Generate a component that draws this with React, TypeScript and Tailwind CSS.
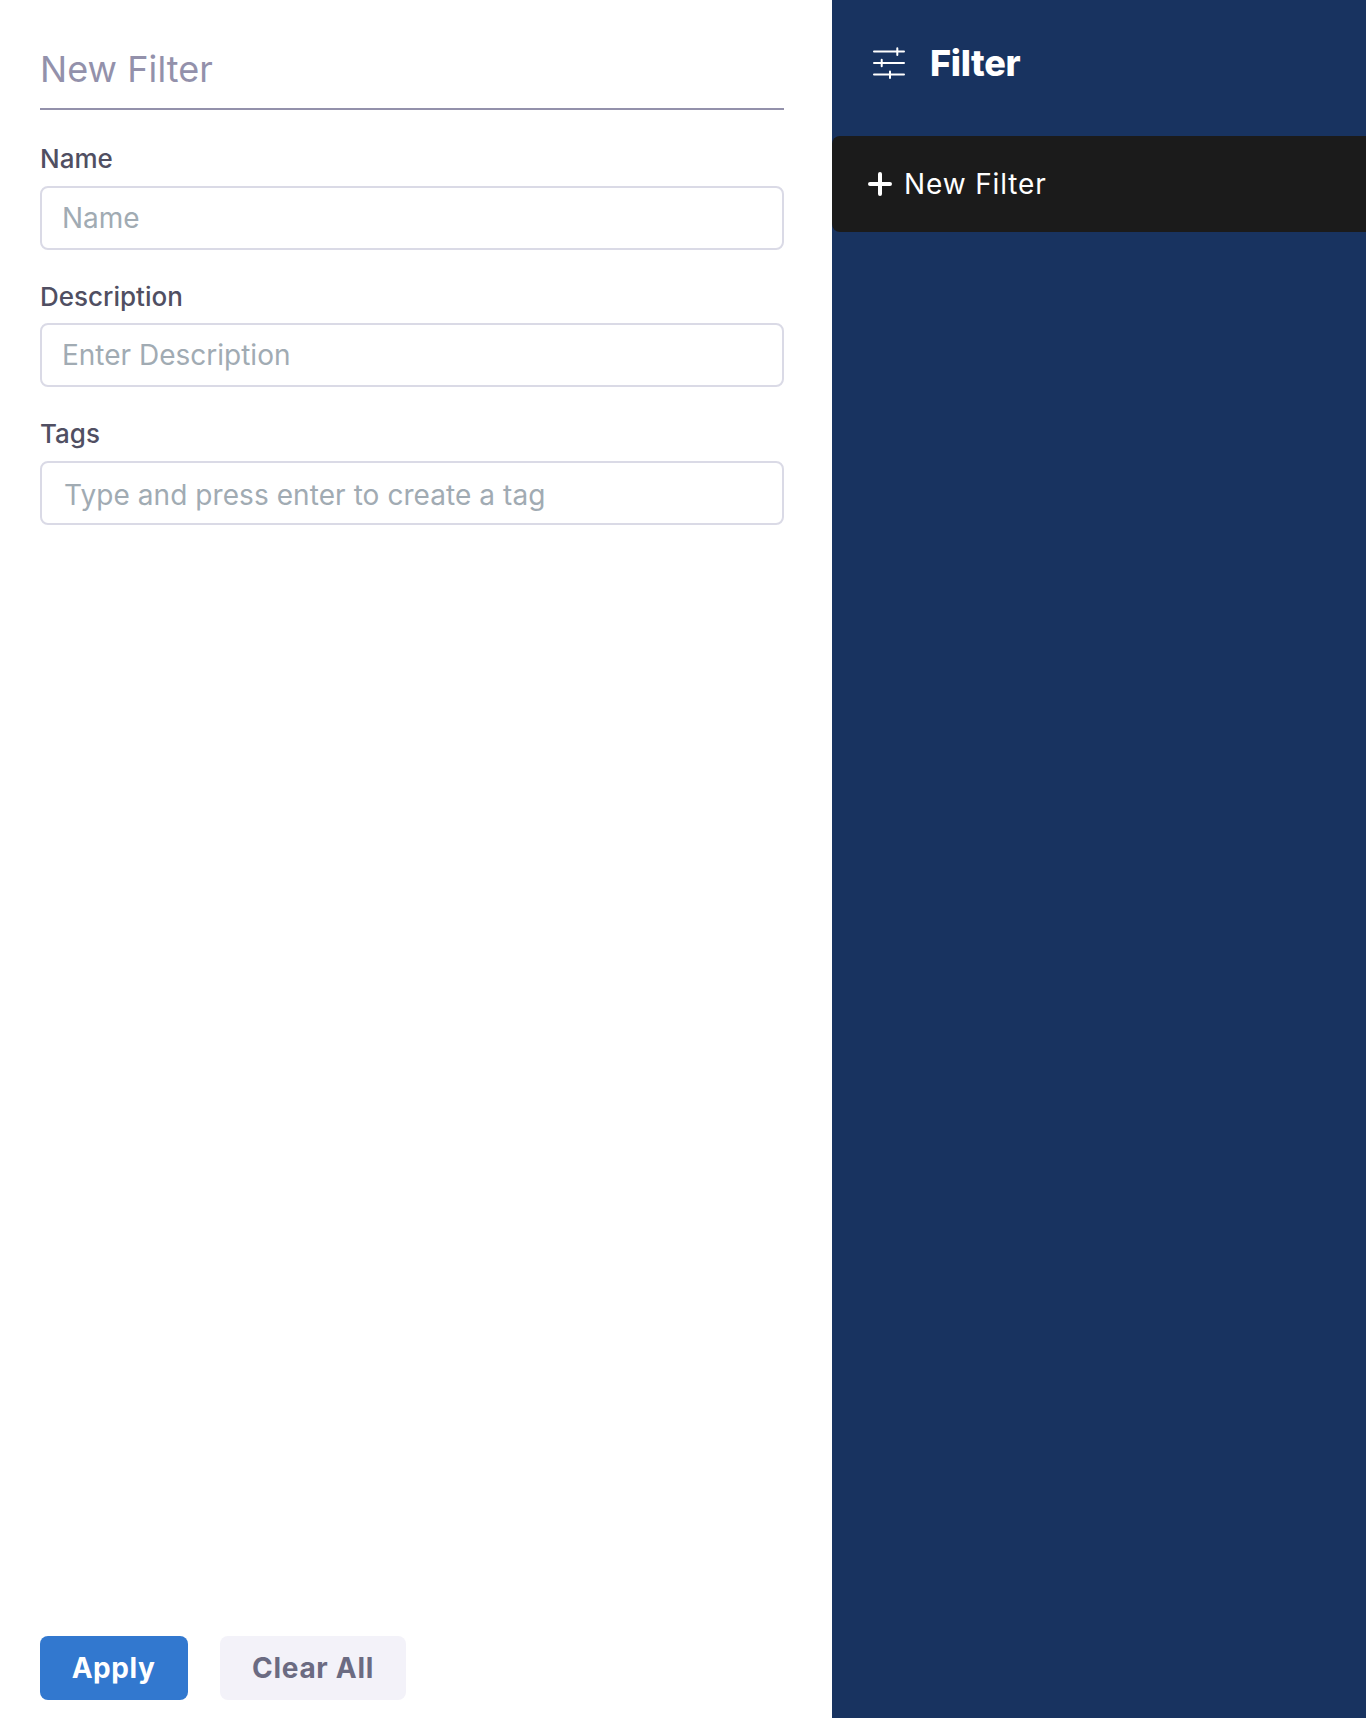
import type { ReactNode } from "react";

function SlidersIcon() {
  return (
    <svg width="32" height="32" viewBox="0 0 32 32" fill="none" stroke="white" strokeWidth="2" strokeLinecap="round" className="shrink-0">
      <path d="M1 4.5H31M1 16H31M1 27.5H31M24.3 1.2V8M8.7 12.8V19.2M17 24.4V31" />
    </svg>
  );
}

function PlusIcon() {
  return (
    <svg width="24" height="24" viewBox="0 0 24 24" fill="none" stroke="white" strokeWidth="4" strokeLinecap="round" className="shrink-0">
      <path d="M2 12H22M12 2V22" />
    </svg>
  );
}

function Field({ label, children }: { label: string; children: ReactNode }) {
  return (
    <label className="block h-[137.4px]">
      <span className="block h-[52px] pt-[0.25px] text-[26px] leading-[50px] font-medium text-[#504f62]">{label}</span>
      {children}
    </label>
  );
}

const inputClass =
  "block h-16 w-full rounded-lg border-2 border-[#dadae6] bg-white px-5 text-[28px] text-[#504f62] outline-none placeholder:text-[#a1abb3] placeholder:opacity-100";

export default function App() {
  return (
    <div className="flex h-[1718px] w-full overflow-hidden bg-white font-['Inter',sans-serif]">
      <main className="flex w-[832px] shrink-0 flex-col pr-12 pl-10">
        <h1 className="h-[110px] border-b-2 border-[#9391ab] pt-[45px] text-[36px] leading-[48px] tracking-[0.06px] text-[#9391ab]">
          New Filter
        </h1>
        <form className="flex grow flex-col pt-6">
          <Field label="Name">
            <input className={inputClass} placeholder="Name" />
          </Field>
          <Field label="Description">
            <input className={inputClass} placeholder="Enter Description" />
          </Field>
          <Field label="Tags">
            <input className={`${inputClass} pt-1 pl-[22px] tracking-[0.07px]`} placeholder="Type and press enter to create a tag" />
          </Field>
          <div className="mt-auto mb-[18px] flex gap-8">
            <button type="button" className="h-16 w-[148px] rounded-lg bg-[#3278cf] pr-px text-[28px] font-bold tracking-[0.56px] text-white">
              Apply
            </button>
            <button type="button" className="h-16 w-[186px] rounded-lg bg-[#f3f2f9] text-[28px] font-bold tracking-[0.7px] text-[#6b6b82]">
              Clear All
            </button>
          </div>
        </form>
      </main>
      <aside className="grow bg-[#183360] text-white">
        <div className="flex h-[136px] items-start gap-[25px] pl-[41px]">
          <div className="pt-[47px]">
            <SlidersIcon />
          </div>
          <h2 className="pt-[39px] text-[36px] leading-[48px] font-extrabold tracking-[-0.3px]">Filter</h2>
        </div>
        <button type="button" className="flex h-24 w-full items-center gap-3 rounded-l-lg bg-[#1b1b1b] pl-9 text-[28px] tracking-[0.86px]">
          <PlusIcon />
          New Filter
        </button>
      </aside>
    </div>
  );
}
